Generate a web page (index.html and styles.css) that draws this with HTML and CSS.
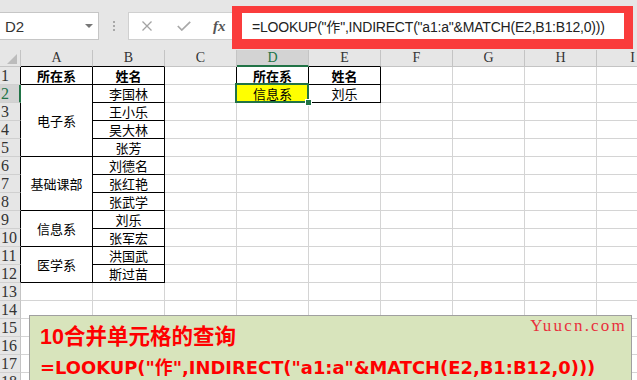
FILE: index.html
```html
<!DOCTYPE html>
<html lang="zh-CN">
<head>
  <meta charset="UTF-8" />
  <title>LOOKUP 合并单元格查询</title>
  <link rel="stylesheet" href="styles.css">
</head>
<body>
  <!-- Formula bar -->
  <div class="toolbar">
    <div class="namebox">
      <span>D2</span>
      <span class="drop"></span>
    </div>
    <div class="grip"><i></i><i></i><i></i></div>
    <div class="fxbtns">
      <svg class="ico-x" width="10" height="10" viewBox="0 0 10 10">
        <path d="M0.5 0.5 L9.5 9.5 M9.5 0.5 L0.5 9.5" stroke="#a3a3a3" stroke-width="1.3" fill="none"/>
      </svg>
      <svg class="ico-ok" width="14" height="10" viewBox="0 0 14 10">
        <path d="M0.8 5 L4.8 9 L13.2 0.8" stroke="#a8a8a8" stroke-width="1.7" fill="none"/>
      </svg>
      <span class="fx">fx</span>
    </div>
    <div class="formula">=LOOKUP("作",INDIRECT("a1:a"&amp;MATCH(E2,B1:B12,0)))</div>
    <div class="callout"></div>
  </div>

  <!-- Sheet -->
  <div class="sheet">
    <div class="ch corner"><svg width="10" height="10" viewBox="0 0 10 10"><polygon points="10,0 10,10 0,10" fill="#bcbcbc"/></svg></div>
    <div class="ch kb">A</div>
    <div class="ch kb">B</div>
    <div class="ch">C</div>
    <div class="ch on">D</div>
    <div class="ch kb">E</div>
    <div class="ch">F</div>
    <div class="ch">G</div>
    <div class="ch">H</div>
    <div class="ch">I</div>

    <div class="rh k">1</div>
    <div class="bx hd">所在系</div>
    <div class="bx hd">姓名</div>
    <div class="kr"></div>
    <div class="bx hd">所在系</div>
    <div class="bx hd">姓名</div>
    <div></div><div></div><div></div><div></div>

    <div class="rh k on">2</div>
    <div class="bx span4">电子系</div>
    <div class="bx">李国林</div>
    <div class="kr"></div>
    <div class="bx pick">信息系<span class="sel"><i></i></span></div>
    <div class="bx">刘乐</div>
    <div></div><div></div><div></div><div></div>

    <div class="rh k">3</div>
    <div class="bx">王小乐</div>
    <div></div><div></div><div></div><div></div><div></div><div></div><div></div>

    <div class="rh k">4</div>
    <div class="bx">吴大林</div>
    <div></div><div></div><div></div><div></div><div></div><div></div><div></div>

    <div class="rh k">5</div>
    <div class="bx">张芳</div>
    <div></div><div></div><div></div><div></div><div></div><div></div><div></div>

    <div class="rh k">6</div>
    <div class="bx span3">基础课部</div>
    <div class="bx">刘德名</div>
    <div></div><div></div><div></div><div></div><div></div><div></div><div></div>

    <div class="rh k">7</div>
    <div class="bx">张红艳</div>
    <div></div><div></div><div></div><div></div><div></div><div></div><div></div>

    <div class="rh k">8</div>
    <div class="bx">张武学</div>
    <div></div><div></div><div></div><div></div><div></div><div></div><div></div>

    <div class="rh k">9</div>
    <div class="bx span2">信息系</div>
    <div class="bx">刘乐</div>
    <div></div><div></div><div></div><div></div><div></div><div></div><div></div>

    <div class="rh k">10</div>
    <div class="bx">张军宏</div>
    <div></div><div></div><div></div><div></div><div></div><div></div><div></div>

    <div class="rh k">11</div>
    <div class="bx span2">医学系</div>
    <div class="bx">洪国武</div>
    <div></div><div></div><div></div><div></div><div></div><div></div><div></div>

    <div class="rh k">12</div>
    <div class="bx">斯过苗</div>
    <div></div><div></div><div></div><div></div><div></div><div></div><div></div>

    <div class="rh">13</div>
    <div></div><div></div><div></div><div></div><div></div><div></div><div></div><div></div><div></div>
    <div class="rh">14</div>
    <div></div><div></div><div></div><div></div><div></div><div></div><div></div><div></div><div></div>
    <div class="rh">15</div>
    <div></div><div></div><div></div><div></div><div></div><div></div><div></div><div></div><div></div>
    <div class="rh">16</div>
    <div></div><div></div><div></div><div></div><div></div><div></div><div></div><div></div><div></div>
    <div class="rh">17</div>
    <div></div><div></div><div></div><div></div><div></div><div></div><div></div><div></div><div></div>
    <div class="rh">18</div>
    <div></div><div></div><div></div><div></div><div></div><div></div><div></div><div></div><div></div>
  </div>

  <!-- Note banner -->
  <div class="note">
    <div class="note-title">10合并单元格的查询</div>
    <div class="note-formula">=LOOKUP("作",INDIRECT("a1:a"&amp;MATCH(E2,B1:B12,0)))</div>
    <div class="mark">Yuucn.com</div>
  </div>
</body>
</html>
```

FILE: styles.css
```css
body {
  margin: 0;
  width: 637px;
  height: 380px;
  overflow: hidden;
  position: relative;
  background: #fff;
  font-family: "Liberation Sans", "Noto Sans CJK SC", sans-serif;
}

/* formula bar */
.toolbar {
  position: relative;
  height: 50px;
  box-sizing: border-box;
  padding-top: 2px;
  display: flex;
  align-items: center;
  background: #e6e6e6;
}

.namebox {
  width: 99px;
  height: 28px;
  box-sizing: border-box;
  border: 1px solid #c6c6c6;
  border-left: 0;
  background: #fff;
  display: flex;
  align-items: center;
  justify-content: space-between;
  padding: 0 5px;
  font-size: 15px;
  color: #333;
}

.drop {
  width: 0;
  height: 0;
  border-left: 4px solid transparent;
  border-right: 4px solid transparent;
  border-top: 4px solid #777;
}

.grip {
  margin-left: 14px;
  display: flex;
  flex-direction: column;
  gap: 2px;
}

.grip i {
  display: block;
  width: 2px;
  height: 2px;
  background: #a8a8a8;
}

.fxbtns {
  margin-left: 13px;
  width: 112px;
  height: 28px;
  box-sizing: border-box;
  border: 1px solid #d0d0d0;
  background: #fff;
  display: flex;
  align-items: center;
  padding-left: 13px;
}

.ico-ok {
  margin-left: 25px;
}

.fx {
  margin-left: 22px;
  font-family: "Liberation Serif", serif;
  font-style: italic;
  font-weight: bold;
  font-size: 15px;
  color: #555;
}

.formula {
  flex: 1;
  margin-right: 8px;
  height: 28px;
  box-sizing: border-box;
  border: 1px solid #d0d0d0;
  border-left: 0;
  background: #fff;
  padding-left: 12px;
  display: flex;
  align-items: center;
  white-space: nowrap;
  font-size: 14px;
  letter-spacing: -0.2px;
  color: #222;
}

.callout {
  position: absolute;
  left: 232px;
  top: 6px;
  width: 401px;
  height: 43px;
  box-sizing: border-box;
  border: solid #fa3c3c;
  border-width: 7px 9px 10px 10px;
}

/* sheet grid */
.sheet {
  display: grid;
  grid-template-columns: 21px repeat(9, 72px);
  grid-template-rows: 17px repeat(18, 18px);
  font-family: "Noto Sans CJK SC", sans-serif;
  font-size: 13px;
  color: #000;
}

.sheet > div {
  box-sizing: border-box;
  border-right: 1px solid #d4d4d4;
  border-bottom: 1px solid #d4d4d4;
  display: flex;
  align-items: center;
  justify-content: center;
  white-space: nowrap;
}

.sheet > .ch {
  background: #e6e6e6;
  border-right-color: #c4c4c4;
  border-bottom-color: #c4c4c4;
  font-family: "Liberation Serif", serif;
  font-size: 14px;
  color: #333;
}

.sheet > .corner {
  justify-content: flex-end;
  align-items: flex-end;
  padding: 0 3px 2px 0;
}

.sheet > .rh {
  background: #e6e6e6;
  border-right-color: #c4c4c4;
  border-bottom-color: #d0d0d0;
  justify-content: flex-start;
  padding-left: 1px;
  font-family: "Liberation Serif", serif;
  font-size: 16px;
  color: #333;
}

.sheet > .k { border-right-color: #000; }
.sheet > .kb { border-bottom-color: #000; }
.sheet > .kr { border-right-color: #000; }

.sheet > .bx {
  border-right-color: #000;
  border-bottom-color: #000;
}

.sheet > .ch.on {
  background: #d3d3d3;
  color: #217346;
  border-bottom: 2px solid #217346;
}

.sheet > .rh.on {
  background: #d3d3d3;
  color: #217346;
  border-right: 2px solid #217346;
}

.hd { font-weight: bold; }

.span4 { grid-row: span 4; }
.span3 { grid-row: span 3; }
.span2 { grid-row: span 2; }

.sheet > .pick {
  position: relative;
  z-index: 1;
  background: #ffff00;
}

.sel {
  position: absolute;
  left: -2px;
  top: -2px;
  right: -1px;
  bottom: -1px;
  border: 2px solid #217346;
}

.sel i {
  position: absolute;
  right: -5px;
  bottom: -5px;
  width: 5px;
  height: 5px;
  background: #217346;
  border: 1px solid #fff;
}

/* note banner over the sheet */
.note {
  position: absolute;
  left: 29px;
  top: 315px;
  width: 603px;
  height: 80px;
  box-sizing: border-box;
  border: 1px solid #a0a0a0;
  background: #d8e4bc;
  padding: 7px 0 0 10px;
  color: #ff0000;
  font-weight: bold;
}

.note-title {
  font-family: "Liberation Sans", "Noto Sans CJK SC", sans-serif;
  font-size: 21.5px;
  line-height: 28px;
}

.note-formula {
  margin-top: 4px;
  font-family: "DejaVu Sans", "Noto Sans CJK SC", sans-serif;
  font-size: 17.9px;
  line-height: 25px;
  white-space: nowrap;
}

.mark {
  position: absolute;
  top: 1px;
  right: 4px;
  font-family: "Liberation Serif", serif;
  font-weight: normal;
  font-size: 17px;
  line-height: 17px;
  letter-spacing: 2.2px;
  color: #e8303c;
}
```
